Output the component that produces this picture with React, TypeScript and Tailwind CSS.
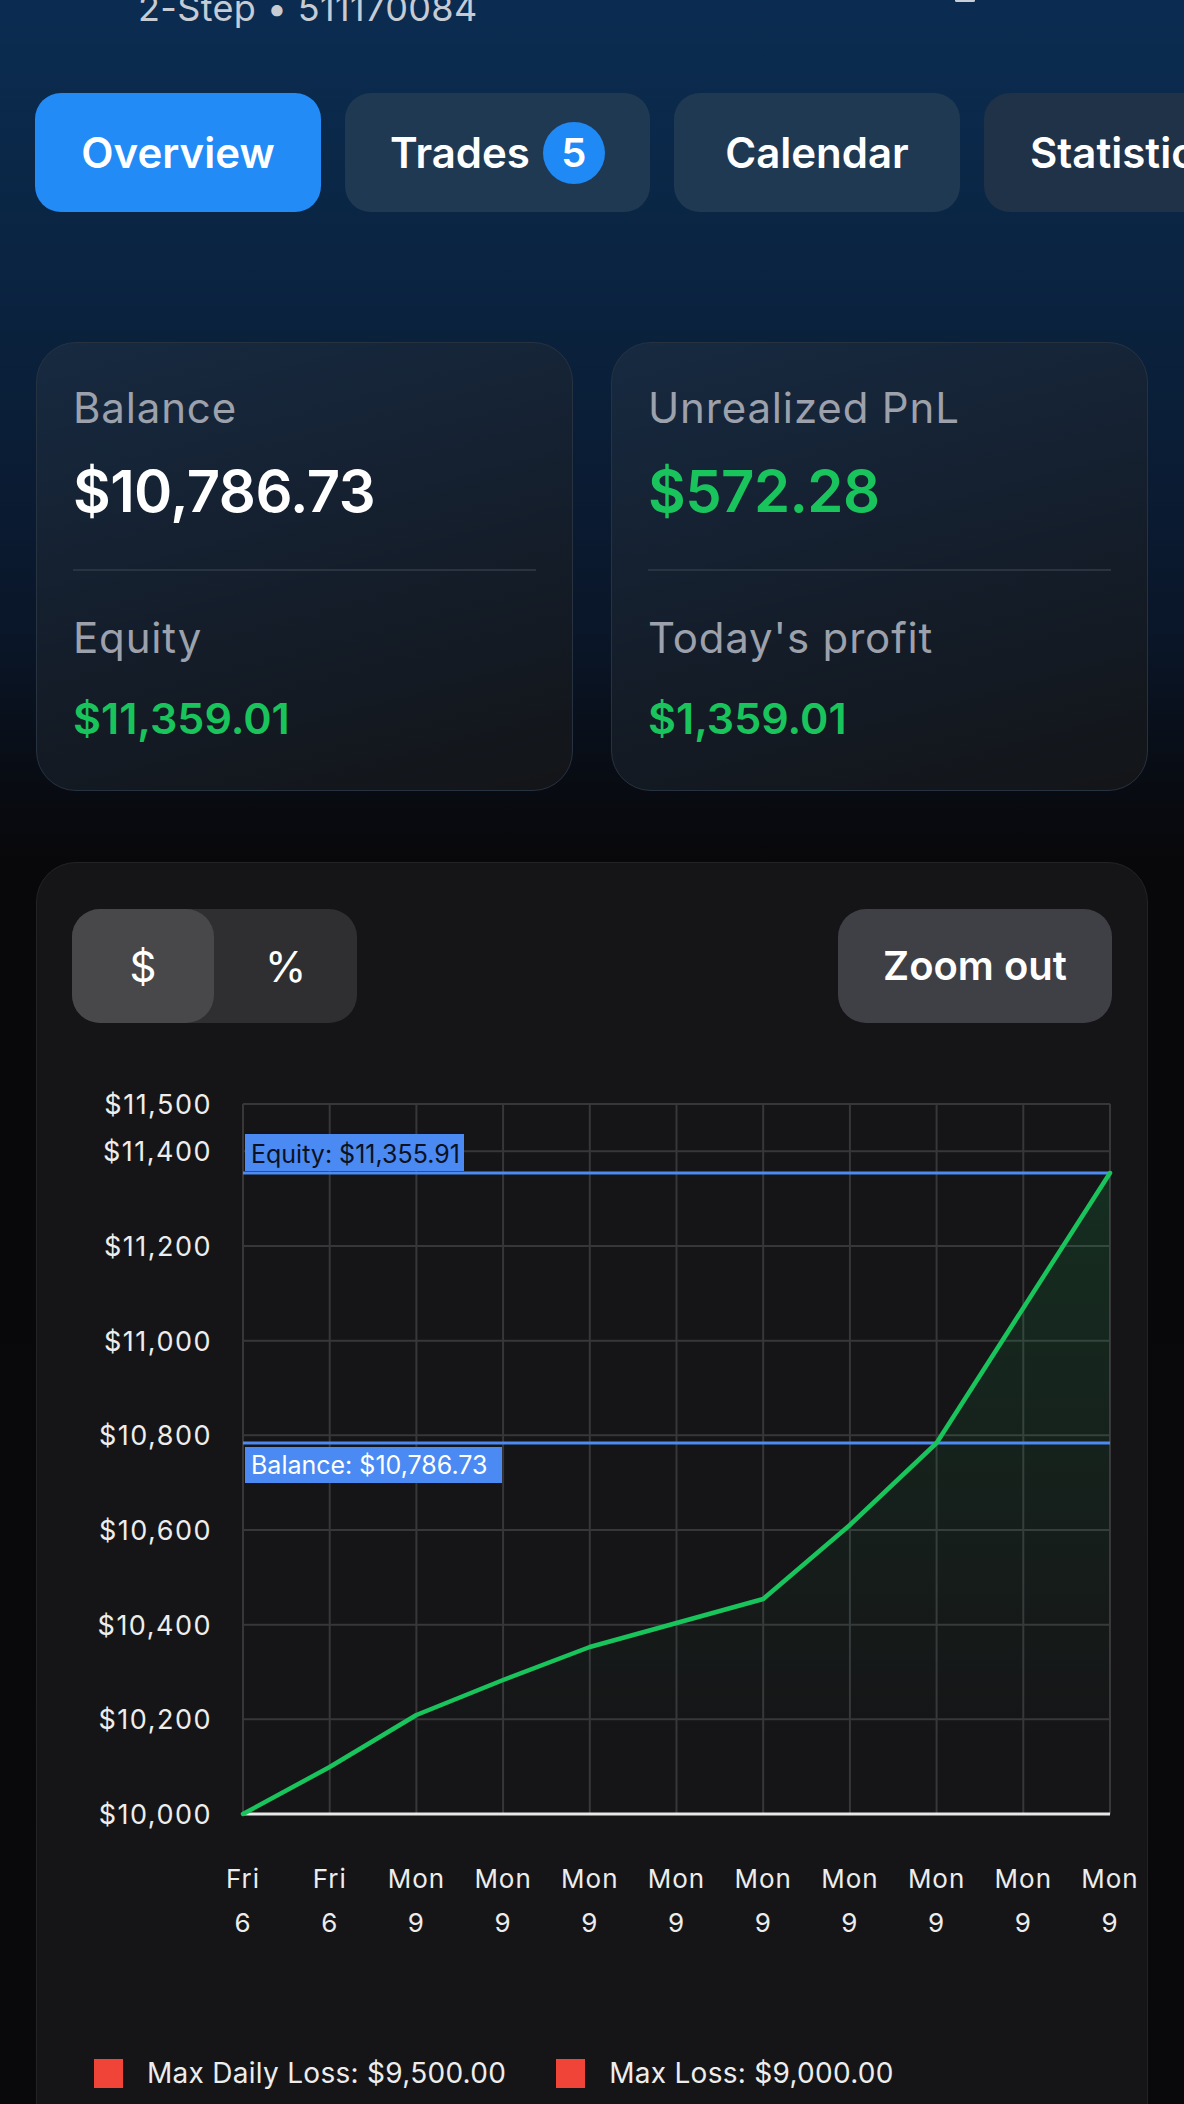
import React from "react";

const GREEN = "#19c45c";

// chart geometry, local svg coords (svg sits at page x=37, y=1060)
const PLOT_L = 206;
const PLOT_R = 1073;
const PLOT_T = 44;
const PLOT_B = 754;
const STEP_X = (PLOT_R - PLOT_L) / 10;
const yOf = (v: number) => PLOT_T + (11500 - v) * ((PLOT_B - PLOT_T) / 1500);

const xs = Array.from({ length: 11 }, (_, i) => PLOT_L + i * STEP_X);
const lineY = [754, 707, 655, 620, 587, 563, 539, 465, 383, 248, 113];
const gridValues = [11500, 11400, 11200, 11000, 10800, 10600, 10400, 10200];
const axisValues = [11500, 11400, 11200, 11000, 10800, 10600, 10400, 10200, 10000];
const days = ["Fri", "Fri", "Mon", "Mon", "Mon", "Mon", "Mon", "Mon", "Mon", "Mon", "Mon"];
const dates = ["6", "6", "9", "9", "9", "9", "9", "9", "9", "9", "9"];

function StatCard({
  topLabel,
  topValue,
  topGreen,
  bottomLabel,
  bottomValue,
}: {
  topLabel: string;
  topValue: string;
  topGreen?: boolean;
  bottomLabel: string;
  bottomValue: string;
}) {
  return (
    <div className="w-[537px] h-[449px] shrink-0 rounded-[40px] border border-[#273241] bg-[linear-gradient(165deg,#172a41_0%,#141d2a_55%,#131518_100%)] px-[36px] pt-[41px]">
      <p className="text-[42px] leading-[48px] text-[#9ca1ab] tracking-[0.02em]">{topLabel}</p>
      <p
        className={`mt-[30px] text-[58px] leading-[58px] font-semibold tracking-[-0.01em] ${
          topGreen ? "text-[#19c45c]" : "text-white"
        }`}
      >
        {topValue}
      </p>
      <div className="mt-[49px] h-[2px] bg-[#2a3340]" />
      <p className="mt-[43px] text-[42px] leading-[48px] text-[#9ca1ab] tracking-[0.02em]">{bottomLabel}</p>
      <p className="mt-[35px] text-[43px] leading-[43px] font-semibold text-[#19c45c]">{bottomValue}</p>
    </div>
  );
}

function EquityChart() {
  const pts = xs.map((x, i) => `${x},${lineY[i]}`).join(" ");
  const area = `${PLOT_L},${PLOT_B} ${pts} ${PLOT_R},${PLOT_B}`;
  return (
    <svg width="1110" height="885" viewBox="0 0 1110 885" className="block">
      <defs>
        <linearGradient id="fillG" x1="0" y1="113" x2="0" y2="680" gradientUnits="userSpaceOnUse">
          <stop offset="0" stopColor={GREEN} stopOpacity="0.14" />
          <stop offset="1" stopColor={GREEN} stopOpacity="0" />
        </linearGradient>
      </defs>

      {/* grid */}
      {gridValues.map((v) => (
        <line key={v} x1={PLOT_L} x2={PLOT_R} y1={yOf(v)} y2={yOf(v)} stroke="#37373a" strokeWidth="2" />
      ))}
      {xs.map((x, i) => (
        <line key={i} x1={x} x2={x} y1={PLOT_T} y2={PLOT_B} stroke="#37373a" strokeWidth="2" />
      ))}

      {/* y axis */}
      {axisValues.map((v) => (
        <text
          key={v}
          x="175"
          y={yOf(v) + 10}
          textAnchor="end"
          fontSize="27"
          fill="#ededed"
          letterSpacing="1.5"
          fontFamily="Inter, sans-serif"
        >
          ${v.toLocaleString("en-US")}
        </text>
      ))}

      <polygon points={area} fill="url(#fillG)" />

      {/* equity / balance reference lines */}
      <line x1={PLOT_L} x2={PLOT_R} y1="113" y2="113" stroke="#4d8bf2" strokeWidth="3" />
      <rect x="208" y="74" width="219" height="37" fill="#4b8af3" />
      <text x="214" y="103" fontSize="25" fill="#0c1222" fontFamily="Inter, sans-serif">
        Equity: $11,355.91
      </text>

      <line x1={PLOT_L} x2={PLOT_R} y1="383" y2="383" stroke="#4d8bf2" strokeWidth="3" />
      <rect x="208" y="387" width="257" height="36" fill="#4b8af3" />
      <text x="214" y="414" fontSize="25" fill="#ffffff" fontFamily="Inter, sans-serif">
        Balance: $10,786.73
      </text>

      <line x1={PLOT_L} x2={PLOT_R} y1={PLOT_B} y2={PLOT_B} stroke="#e8e8e8" strokeWidth="3" />

      <polyline points={pts} fill="none" stroke={GREEN} strokeWidth="4.5" strokeLinejoin="round" strokeLinecap="round" />

      {/* x axis */}
      {xs.map((x, i) => (
        <g key={i} fontFamily="Inter, sans-serif" fontSize="26" fill="#ededed" textAnchor="middle" letterSpacing="1">
          <text x={x} y="828">{days[i]}</text>
          <text x={x} y="872">{dates[i]}</text>
        </g>
      ))}
    </svg>
  );
}

export default function App() {
  return (
    <div className="w-[1184px] h-[2104px] overflow-hidden bg-[linear-gradient(180deg,#0b2c51_0%,#0a2645_10%,#0a1e37_20%,#0a1629_30%,#080c13_37%,#08080a_41%,#09090b_100%)] font-['Inter',sans-serif]">
      {/* header (scrolled, partly cut off) */}
      <div className="flex items-start h-[44px] -mt-[14px] pl-[138px] pr-[209px]">
        <p className="text-[36px] leading-[44px] text-[#c6cbd4] tracking-[0.01em]">2-Step • 511170084</p>
        <div className="ml-auto mt-[13px] h-[3px] w-[20px] rounded-full bg-[#c9cfd8]" />
      </div>

      {/* tabs */}
      <div className="mt-[63px] flex gap-[24px] pl-[35px] overflow-hidden">
        <button className="w-[286px] h-[119px] shrink-0 rounded-[26px] bg-[#228bf5] text-white text-[42px] font-semibold flex items-center justify-center">
          Overview
        </button>
        <button className="w-[305px] h-[119px] shrink-0 rounded-[26px] bg-[#203953] text-white text-[42px] font-semibold flex items-center justify-center gap-[13px]">
          Trades
          <span className="w-[62px] h-[62px] rounded-full bg-[#1f89f6] flex items-center justify-center text-[40px] leading-none">
            5
          </span>
        </button>
        <button className="w-[286px] h-[119px] shrink-0 rounded-[26px] bg-[#203953] text-white text-[42px] font-semibold flex items-center justify-center">
          Calendar
        </button>
        <button className="w-[286px] h-[119px] shrink-0 rounded-[26px] bg-[#1f3248] text-white text-[42px] font-semibold flex items-center pl-[46px]">
          Statistics
        </button>
      </div>

      {/* stat cards */}
      <div className="mt-[130px] flex gap-[38px] pl-[36px]">
        <StatCard topLabel="Balance" topValue="$10,786.73" bottomLabel="Equity" bottomValue="$11,359.01" />
        <StatCard
          topLabel="Unrealized PnL"
          topValue="$572.28"
          topGreen
          bottomLabel="Today's profit"
          bottomValue="$1,359.01"
        />
      </div>

      {/* chart card */}
      <div className="mt-[71px] ml-[36px] w-[1112px] h-[1300px] rounded-[40px] border border-[#232326] bg-[#151517]">
        <div className="flex items-center justify-between px-[35px] pt-[46px]">
          <div className="flex h-[114px] w-[285px] rounded-[28px] bg-[#2f2f32]">
            <button className="w-[142px] h-full rounded-[28px] bg-[#48484b] text-white text-[42px] flex items-center justify-center">
              $
            </button>
            <button className="flex-1 h-full text-white text-[42px] flex items-center justify-center">%</button>
          </div>
          <button className="h-[114px] w-[274px] rounded-[28px] bg-[#3f3f46] text-white text-[40px] font-semibold flex items-center justify-center">
            Zoom out
          </button>
        </div>

        <div className="mt-[37px]">
          <EquityChart />
        </div>

        <div className="mt-[107px] flex items-center pl-[57px] text-[28px] text-[#ededed] tracking-[0.01em]">
          <span className="w-[29px] h-[29px] bg-[#f04438]" />
          <span className="ml-[24px]">Max Daily Loss: $9,500.00</span>
          <span className="ml-[50px] w-[29px] h-[29px] bg-[#f04438]" />
          <span className="ml-[24px]">Max Loss: $9,000.00</span>
        </div>
      </div>
    </div>
  );
}
